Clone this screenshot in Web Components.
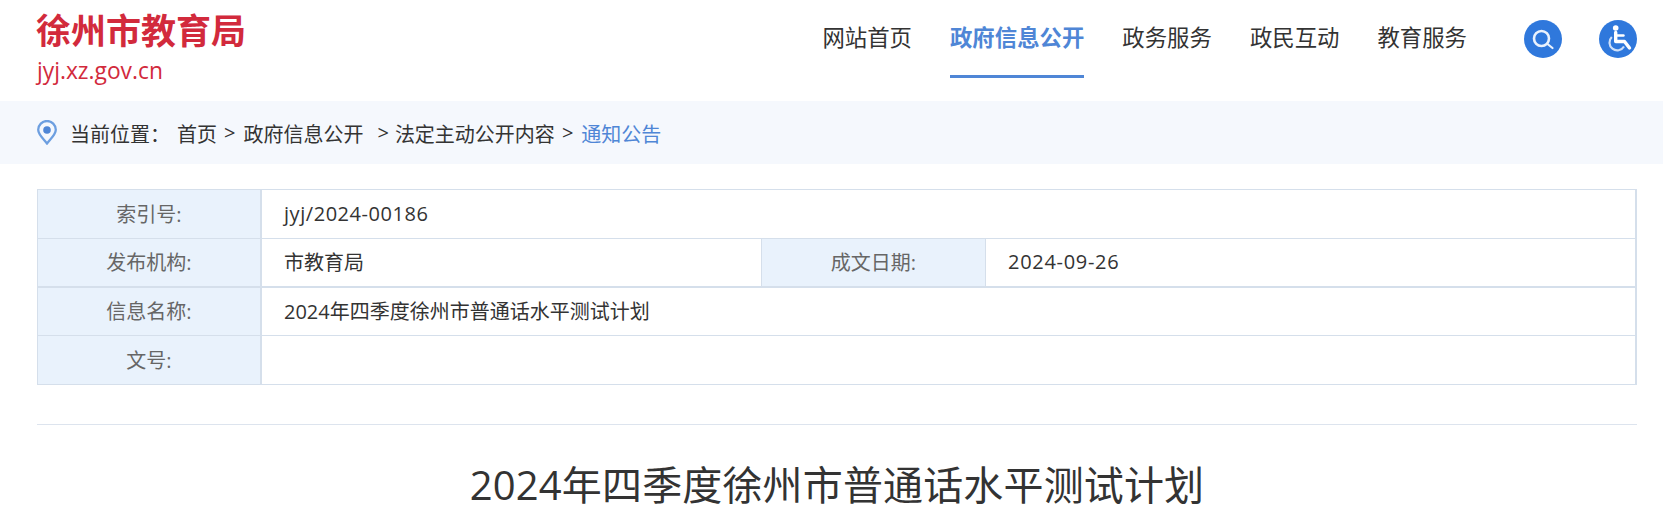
<!DOCTYPE html>
<html lang="zh-CN">
<head>
<meta charset="utf-8">
<title>2024年四季度徐州市普通话水平测试计划</title>
<style>
  html, body { margin: 0; background: #fff; overflow: hidden; }
  body { font-family: "Open Sans", "Noto Sans CJK SC", sans-serif; color: #333; }
</style>
</head>
<body>
<site-header>
  <site-logo slot="logo" name="徐州市教育局" domain="jyj.xz.gov.cn"></site-logo>
  <nav-link>网站首页</nav-link>
  <nav-link active>政府信息公开</nav-link>
  <nav-link>政务服务</nav-link>
  <nav-link>政民互动</nav-link>
  <nav-link>教育服务</nav-link>
  <round-icon slot="tools" kind="search"></round-icon>
  <round-icon slot="tools" kind="access"></round-icon>
</site-header>
<crumb-bar label="当前位置：">
  <crumb-item first>首页</crumb-item>
  <crumb-item>政府信息公开</crumb-item>
  <crumb-item wide>法定主动公开内容</crumb-item>
  <crumb-item current>通知公告</crumb-item>
</crumb-bar>
<doc-info>
  <info-cell label thick>索引号:</info-cell>
  <info-cell span="3" latin="tight">jyj/2024-00186</info-cell>
  <info-cell label thick heavy>发布机构:</info-cell>
  <info-cell heavy>市教育局</info-cell>
  <info-cell label heavy>成文日期:</info-cell>
  <info-cell heavy latin end>2024-09-26</info-cell>
  <info-cell label thick>信息名称:</info-cell>
  <info-cell span="3">2024年四季度徐州市普通话水平测试计划</info-cell>
  <info-cell label thick>文号:</info-cell>
  <info-cell span="3"></info-cell>
</doc-info>
<doc-title>2024年四季度徐州市普通话水平测试计划</doc-title>

<script>
// each element keeps its own markup + styles in the shadow root
class SiteHeader extends HTMLElement {
  constructor() {
    super();
    this.attachShadow({ mode: 'open' });
    this.shadowRoot.innerHTML = `
      <style>
        :host { display: flex; justify-content: space-between; height: 101px; padding: 0 26px 0 37px; }
        .right { display: flex; align-items: flex-start; }
        .nav { display: flex; gap: 38px; }
        .tools { display: flex; gap: 37px; margin: 20px 0 0 57px; }
      </style>
      <slot name="logo"></slot>
      <div class="right">
        <div class="nav"><slot></slot></div>
        <div class="tools"><slot name="tools"></slot></div>
      </div>
    `;
  }
}

class SiteLogo extends HTMLElement {
  constructor() {
    super();
    this.attachShadow({ mode: 'open' });
  }
  connectedCallback() {
    this.shadowRoot.innerHTML = `
      <style>
        :host { display: block; color: #d22a3c; padding-top: 9px; }
        .name { font-size: 35px; font-weight: 700; line-height: 44px; margin-left: -1px; }
        .domain { font-size: 22.8px; line-height: 30px; margin-top: 3px; }
      </style>
      <div class="name">${this.getAttribute('name')}</div>
      <div class="domain">${this.getAttribute('domain')}</div>
    `;
  }
}

class NavLink extends HTMLElement {
  constructor() {
    super();
    this.attachShadow({ mode: 'open' });
    this.shadowRoot.innerHTML = `
      <style>
        :host { display: block; box-sizing: border-box; height: 78px; padding-top: 22px; font-size: 22.4px; line-height: 32px; color: #333; }
        :host([active]) { color: #4f86d6; font-weight: 700; border-bottom: 3px solid #4f86d6; }
      </style>
      <slot></slot>
    `;
  }
}

class RoundIcon extends HTMLElement {
  constructor() {
    super();
    this.attachShadow({ mode: 'open' });
  }
  connectedCallback() {
    const search = `
      <circle cx="17.500" cy="18.500" r="7.500" fill="none" stroke="#eaf2fd" stroke-width="2.600"/>
      <path d="M23.500 24 L28.500 28" stroke="#eaf2fd" stroke-width="2.200" stroke-linecap="round"/>`;
    const access = `
      <circle cx="16.700" cy="8" r="2.800" fill="#fff"/>
      <path d="M16.700 12.500 V21.500 H25.500 L30.500 28" fill="none" stroke="#fff" stroke-width="3.400" stroke-linecap="round" stroke-linejoin="round"/>
      <path d="M17 15.500 H24.500" stroke="#fff" stroke-width="2.400" stroke-linecap="round"/>
      <path d="M12.800 17 A7.800 7.800 0 1 0 25 26.500" fill="none" stroke="#cfe0f8" stroke-width="2.200"/>`;
    this.shadowRoot.innerHTML = `
      <style>
        :host { display: block; width: 38px; height: 38px; border-radius: 50%; background: #2f78dc; }
        svg { display: block; }
      </style>
      <svg width="38" height="38" viewBox="0 0 38 38">${this.getAttribute('kind') === 'search' ? search : access}</svg>
    `;
  }
}

class CrumbBar extends HTMLElement {
  constructor() {
    super();
    this.attachShadow({ mode: 'open' });
  }
  connectedCallback() {
    this.shadowRoot.innerHTML = `
      <style>
        :host { display: flex; align-items: center; height: 63px; padding-left: 37px; background: #f5f8fd; font-size: 20px; color: #333; }
        svg { display: block; margin-right: 13px; flex: none; }
        .label { width: 107px; flex: none; white-space: nowrap; }
        .label, .items { padding-top: 2px; }
        .items { display: flex; }
      </style>
      <svg width="20" height="25" viewBox="0 0 20 25">
        <path d="M10 23.500 C6 18.500 1.200 14.500 1.200 9.800 A8.800 8.800 0 0 1 18.800 9.800 C18.800 14.500 14 18.500 10 23.500 Z" fill="none" stroke="#6d9fe0" stroke-width="2.300"/>
        <circle cx="10" cy="10" r="3.800" fill="#4f86d6"/>
      </svg>
      <span class="label">${this.getAttribute('label')}</span>
      <div class="items"><slot></slot></div>
    `;
  }
}

class CrumbItem extends HTMLElement {
  constructor() {
    super();
    this.attachShadow({ mode: 'open' });
    this.shadowRoot.innerHTML = `
      <style>
        :host { display: flex; white-space: nowrap; }
        :host([current]) { color: #4f86d6; }
        .sep { color: #333; margin: 0 8px 0 7px; }
        :host([wide]) .sep { margin-left: 14px; margin-right: 6px; }
        :host([current]) .sep { margin-right: 8px; }
        :host([first]) .sep { display: none; }
      </style>
      <span class="sep">&gt;</span><slot></slot>
    `;
  }
}

class DocInfo extends HTMLElement {
  constructor() {
    super();
    this.attachShadow({ mode: 'open' });
    this.shadowRoot.innerHTML = `
      <style>
        :host {
          display: grid;
          grid-template-columns: 224px 500px 224px 1fr;
          grid-template-rows: 49px 49px 48px 49px;
          margin: 25px 26px 0 37px;
          border: 1px solid #d5dfeb;
          border-right-width: 2px;
          border-bottom: 0;
        }
      </style>
      <slot></slot>
    `;
  }
}

class InfoCell extends HTMLElement {
  constructor() {
    super();
    this.attachShadow({ mode: 'open' });
    this.shadowRoot.innerHTML = `
      <style>
        :host {
          display: flex; align-items: center; box-sizing: border-box;
          padding: 0 0 2px 22px; font-size: 20px; color: #333;
          border-right: 1px solid #d5dfeb; border-bottom: 1px solid #d5dfeb;
        }
        :host([span="3"]), :host([end]) { border-right: 0; }
        :host([span="3"]) { grid-column: span 3; }
        :host([latin]) { letter-spacing: 0.7px; }
        :host([latin="tight"]) { letter-spacing: 0.55px; }
        :host([label]) { justify-content: center; padding-left: 0; background: #e9f2fc; color: #666; }
        :host([thick]) { border-right-width: 2px; }
        :host([heavy]) { border-bottom-width: 2px; }
      </style>
      <slot></slot>
    `;
  }
}

class DocTitle extends HTMLElement {
  constructor() {
    super();
    this.attachShadow({ mode: 'open' });
    this.shadowRoot.innerHTML = `
      <style>
        :host { display: block; margin: 39px 26px 0 37px; padding-top: 30px; border-top: 1px solid #dde4ee; text-align: center; font-size: 40px; line-height: 60px; letter-spacing: 0.15px; color: #333; }
      </style>
      <slot></slot>
    `;
  }
}

customElements.define('site-header', SiteHeader);
customElements.define('site-logo', SiteLogo);
customElements.define('nav-link', NavLink);
customElements.define('round-icon', RoundIcon);
customElements.define('crumb-bar', CrumbBar);
customElements.define('crumb-item', CrumbItem);
customElements.define('doc-info', DocInfo);
customElements.define('info-cell', InfoCell);
customElements.define('doc-title', DocTitle);
</script>
</body>
</html>
